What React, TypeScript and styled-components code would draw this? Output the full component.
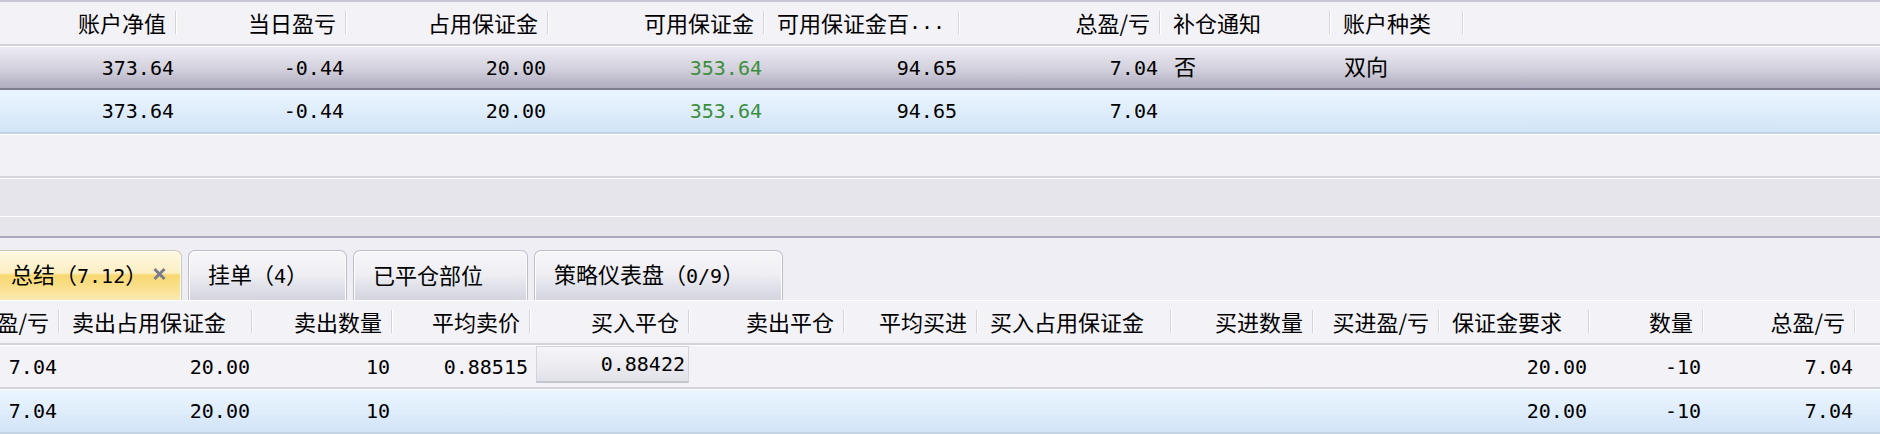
import React from "react";
import styled, { createGlobalStyle } from "styled-components";

type Align = "left" | "right";
type Variant = "selected" | "hover" | "plain";

interface Column {
  title: React.ReactNode;
  width: number;
  head: Align;
}

interface CellData {
  text: string;
  align?: Align;
  mono?: boolean;
  green?: boolean;
  button?: boolean;
}

const GlobalStyle = createGlobalStyle`
  html, body {
    margin: 0;
    padding: 0;
    background: #f2f1f6;
    overflow: hidden;
  }
  body {
    font-family: "Noto Sans CJK SC", "Noto Sans", sans-serif;
    font-size: 22px;
    line-height: 1;
    color: #000;
  }
`;

const Num = styled.span`
  font-family: "DejaVu Sans Mono", "Liberation Mono", monospace;
  font-size: 20px;
`;

const topColumns: Column[] = [
  { title: "账户净值", width: 177, head: "right" },
  { title: "当日盈亏", width: 170, head: "right" },
  { title: "占用保证金", width: 202, head: "right" },
  { title: "可用保证金", width: 216, head: "right" },
  { title: <>可用保证金百<Num>...</Num></>, width: 195, head: "left" },
  { title: "总盈/亏", width: 201, head: "right" },
  { title: "补仓通知", width: 170, head: "left" },
  { title: "账户种类", width: 133, head: "left" },
];

const n = (text: string, extra: Partial<CellData> = {}): CellData => ({ text, mono: true, align: "right", ...extra });
const t = (text: string): CellData => ({ text, align: "left" });
const empty: CellData = { text: "" };

const topRows: { variant: Variant; cells: CellData[] }[] = [
  {
    variant: "selected",
    cells: [n("373.64"), n("-0.44"), n("20.00"), n("353.64", { green: true }), n("94.65"), n("7.04"), t("否"), t("双向")],
  },
  {
    variant: "hover",
    cells: [n("373.64"), n("-0.44"), n("20.00"), n("353.64", { green: true }), n("94.65"), n("7.04"), empty, empty],
  },
];

const bottomColumns: Column[] = [
  { title: "卖出盈/亏", width: 60, head: "right" },
  { title: "卖出占用保证金", width: 193, head: "left" },
  { title: "卖出数量", width: 140, head: "right" },
  { title: "平均卖价", width: 138, head: "right" },
  { title: "买入平仓", width: 159, head: "right" },
  { title: "卖出平仓", width: 155, head: "right" },
  { title: "平均买进", width: 133, head: "right" },
  { title: "买入占用保证金", width: 194, head: "left" },
  { title: "买进数量", width: 142, head: "right" },
  { title: "买进盈/亏", width: 126, head: "right" },
  { title: "保证金要求", width: 150, head: "left" },
  { title: "数量", width: 114, head: "right" },
  { title: "总盈/亏", width: 152, head: "right" },
];

const bottomRows: { variant: Variant; cells: CellData[] }[] = [
  {
    variant: "plain",
    cells: [
      n("7.04"), n("20.00"), n("10"), n("0.88515"), n("0.88422", { button: true }),
      empty, empty, empty, empty, empty, n("20.00"), n("-10"), n("7.04"),
    ],
  },
  {
    variant: "hover",
    cells: [
      n("7.04"), n("20.00"), n("10"), empty, empty,
      empty, empty, empty, empty, empty, n("20.00"), n("-10"), n("7.04"),
    ],
  },
];

const tabs = [
  { label: <>总结（<Num>7.12</Num>）</>, width: 191, active: true },
  { label: <>挂单（<Num>4</Num>）</>, width: 159, active: false },
  { label: <>已平仓部位</>, width: 175, active: false },
  { label: <>策略仪表盘（<Num>0/9</Num>）</>, width: 249, active: false },
];

const App = () => {
  return (
    <Page>
      <GlobalStyle />
      <TopEdge />
      <Grid columns={topColumns} rows={topRows} />
      <EmptyArea />
      <Bands>
        <Band $h={37} />
        <Band $h={19} $line />
      </Bands>
      <TabStrip>
        {tabs.map((tab, i) => (
          <Tab key={i} $w={tab.width} $active={tab.active}>
            <span>{tab.label}</span>
            {tab.active && (
              <CloseIcon viewBox="0 0 15 14" width={15} height={14}>
                <path d="M2.5 2 L12.5 12 M12.5 2 L2.5 12" stroke="#7b7b8e" strokeWidth={3} />
              </CloseIcon>
            )}
          </Tab>
        ))}
      </TabStrip>
      <Grid columns={bottomColumns} rows={bottomRows} topLine />
    </Page>
  );
};

const Grid = ({
  columns,
  rows,
  topLine,
}: {
  columns: Column[];
  rows: { variant: Variant; cells: CellData[] }[];
  topLine?: boolean;
}) => (
  <>
    <HeaderRow $topLine={topLine}>
      {columns.map((col, i) => (
        <HeadCell key={i} $w={col.width} $align={col.head}>
          {col.title}
        </HeadCell>
      ))}
      <Filler />
    </HeaderRow>
    {rows.map((row, r) => (
      <Row key={r} $variant={row.variant} $topLine={topLine || row.variant !== "hover"}>
        {row.cells.map((cell, c) => (
          <Cell
            key={c}
            $w={columns[c].width}
            $align={cell.align || "right"}
            $mono={cell.mono}
            $green={cell.green}
          >
            {cell.button ? <ValueButton>{cell.text}</ValueButton> : cell.text}
          </Cell>
        ))}
        <Filler />
      </Row>
    ))}
  </>
);

export default App;

const Page = styled.div`
  width: 1880px;
  height: 434px;
  display: flex;
  flex-direction: column;
  overflow: hidden;
  background: #f2f1f6;
`;

const TopEdge = styled.div`
  height: 2px;
  flex: 0 0 auto;
  background: #c6c6d4;
`;

const HeaderRow = styled.div<{ $topLine?: boolean }>`
  display: flex;
  flex: 0 0 auto;
  height: 42px;
  background: #f3f2f7;
  border-top: ${(p) => (p.$topLine ? "1px solid #fff" : "none")};
  border-bottom: 2px solid #d4d2dc;
`;

const HeadCell = styled.div<{ $w: number; $align: Align }>`
  position: relative;
  box-sizing: border-box;
  flex: 0 0 ${(p) => p.$w}px;
  min-width: 0;
  display: flex;
  align-items: center;
  justify-content: ${(p) => (p.$align === "right" ? "flex-end" : "flex-start")};
  padding: ${(p) => (p.$align === "right" ? "0 11px 3px 0" : "0 0 3px 12px")};
  white-space: nowrap;

  &::after {
    content: "";
    position: absolute;
    right: 0;
    top: 9px;
    height: 23px;
    width: 1px;
    border-left: 1px solid #d5d4de;
    background: #fff;
  }
`;

const rowBackground: Record<Variant, string> = {
  selected: "linear-gradient(to bottom, #ecebf3 0%, #d2d0dc 55%, #afadbf 100%)",
  hover: "linear-gradient(to bottom, #eaf5fe 0%, #dfedfb 50%, #d2e4f8 100%)",
  plain: "#f3f2f7",
};

const rowBorder: Record<Variant, string> = {
  selected: "#7e7c8e",
  hover: "#c4d4e4",
  plain: "#d4d2dc",
};

const Row = styled.div<{ $variant: Variant; $topLine: boolean }>`
  display: flex;
  flex: 0 0 auto;
  height: ${(p) => (p.$variant === "hover" ? 42 : 41)}px;
  background: ${(p) => rowBackground[p.$variant]};
  border-top: ${(p) => (p.$topLine ? "1px solid #fff" : "none")};
  border-bottom: 2px solid ${(p) => rowBorder[p.$variant]};
`;

const Cell = styled.div<{ $w: number; $align: Align; $mono?: boolean; $green?: boolean }>`
  box-sizing: border-box;
  flex: 0 0 ${(p) => p.$w}px;
  min-width: 0;
  display: flex;
  align-items: center;
  justify-content: ${(p) => (p.$align === "right" ? "flex-end" : "flex-start")};
  padding: ${(p) => (p.$align === "right" ? "0 3px 0 0" : p.$mono ? "0 0 0 13px" : "0 0 5px 13px")};
  white-space: nowrap;
  font-family: ${(p) =>
    p.$mono ? `"DejaVu Sans Mono", "Liberation Mono", monospace` : `"Noto Sans CJK SC", sans-serif`};
  font-size: ${(p) => (p.$mono ? 20 : 22)}px;
  color: ${(p) => (p.$green ? "#3c8f3c" : "#000")};
`;

const ValueButton = styled.div`
  box-sizing: border-box;
  align-self: flex-start;
  flex: 1 1 auto;
  height: 37px;
  margin: 0 -2px 0 5px;
  display: flex;
  align-items: center;
  justify-content: flex-end;
  padding-right: 3px;
  border: 1px solid #d4d4de;
  border-bottom: 2px solid #c5c5d2;
  background: linear-gradient(to bottom, #f6f6f9 0%, #ececf1 50%, #e1e1e9 100%);
`;

const Filler = styled.div`
  flex: 1 1 auto;
`;

const EmptyArea = styled.div`
  flex: 0 0 auto;
  height: 41px;
  border-top: 1px solid #fff;
  border-bottom: 2px solid #d6d5df;
  background: #f2f1f6;
`;

const Bands = styled.div`
  display: flex;
  flex-direction: column;
  flex: 0 0 auto;
  border-top: 1px solid #fff;
  border-bottom: 2px solid #a9a9b9;
`;

const Band = styled.div<{ $h: number; $line?: boolean }>`
  height: ${(p) => p.$h}px;
  background: #e5e5eb;
  border-top: ${(p) => (p.$line ? "1px solid #fff" : "none")};
`;

const TabStrip = styled.div`
  display: flex;
  flex: 0 0 auto;
  gap: 6px;
  height: 50px;
  padding-top: 12px;
  margin-left: -9px;
  background: #efeef4;
`;

const Tab = styled.div<{ $w: number; $active: boolean }>`
  box-sizing: border-box;
  flex: 0 0 ${(p) => p.$w}px;
  height: 50px;
  display: flex;
  align-items: center;
  padding: 0 14px 3px 19px;
  white-space: nowrap;
  font-size: 22px;
  border: 1px solid ${(p) => (p.$active ? "#cfc7ad" : "#bdbccb")};
  border-bottom: none;
  border-radius: 7px 7px 0 0;
  box-shadow: inset 1px 1px 0 #fff, inset -1px 0 0 #fff;
  background: ${(p) =>
    p.$active
      ? "linear-gradient(to bottom, #fef8e2 0%, #fcefc4 44%, #f8d871 50%, #f9df8a 72%, #fbe9b2 100%)"
      : "linear-gradient(to bottom, #f7f7fa 0%, #eeeef3 48%, #e2e2eb 70%, #d4d4e0 100%)"};
`;

const CloseIcon = styled.svg`
  flex-shrink: 0;
  margin-left: auto;
`;
